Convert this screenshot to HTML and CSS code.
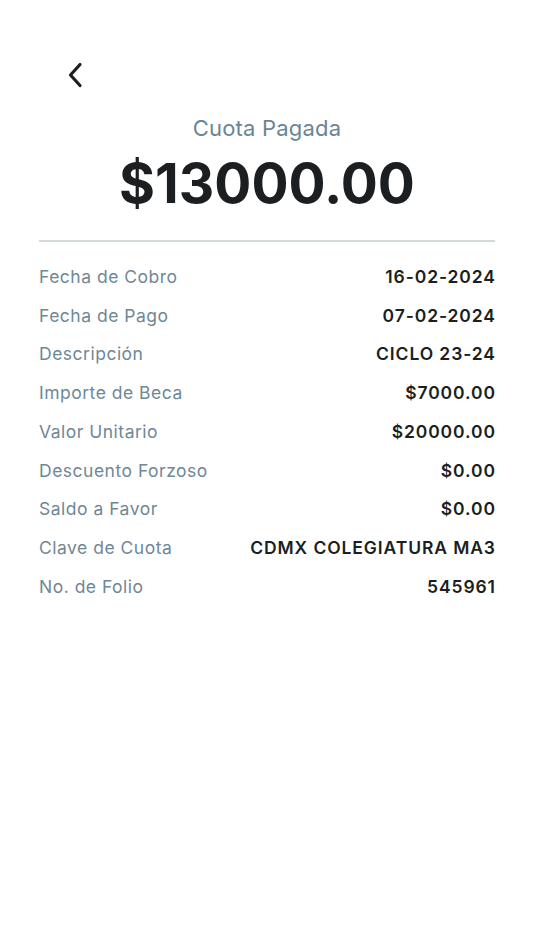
FILE: index.html
```html
<!DOCTYPE html>
<html lang="es">
<head>
<meta charset="utf-8">
<link rel="stylesheet" href="styles.css">
</head>
<body>
<div class="screen">
  <div class="nav">
    <button class="back" aria-label="Atrás">
      <svg width="16" height="26" viewBox="0 0 16 26"><path d="M13 2.5 L3.5 13 L13 23.5" fill="none" stroke="#1b1f22" stroke-width="3.2" stroke-linecap="round" stroke-linejoin="round"/></svg>
    </button>
  </div>
  <div class="header">
    <div class="subtitle">Cuota Pagada</div>
    <div class="amount">$13000.00</div>
  </div>
  <div class="divider"></div>
  <div class="rows">
    <div class="row"><span class="label">Fecha de Cobro</span><span class="value">16-02-2024</span></div>
    <div class="row"><span class="label">Fecha de Pago</span><span class="value">07-02-2024</span></div>
    <div class="row"><span class="label">Descripción</span><span class="value">CICLO 23-24</span></div>
    <div class="row"><span class="label">Importe de Beca</span><span class="value">$7000.00</span></div>
    <div class="row"><span class="label">Valor Unitario</span><span class="value">$20000.00</span></div>
    <div class="row"><span class="label">Descuento Forzoso</span><span class="value">$0.00</span></div>
    <div class="row"><span class="label">Saldo a Favor</span><span class="value">$0.00</span></div>
    <div class="row"><span class="label">Clave de Cuota</span><span class="value">CDMX COLEGIATURA MA3</span></div>
    <div class="row"><span class="label">No. de Folio</span><span class="value">545961</span></div>
  </div>
</div>
</body>
</html>
```

FILE: styles.css
```css
* { box-sizing: border-box; }
html, body { margin: 0; padding: 0; background: #fff; }
body { font-family: Inter, "Noto Sans", sans-serif; color: #1b1f22; }
.screen { width: 534px; min-height: 950px; padding: 0 39px; }
.nav { height: 100px; display: flex; align-items: flex-start; padding-top: 62px; }
.back { background: none; border: 0; padding: 0; margin-left: 28px; width: 16px; height: 26px; display: block; }
.back svg { display: block; }
.header { display: flex; flex-direction: column; align-items: center; }
.subtitle { font-size: 22px; line-height: 28px; color: #6a8595; margin-top: 14px; letter-spacing: 0.2px; }
.amount { font-size: 55px; font-weight: 700; line-height: 66px; margin-top: 8px; letter-spacing: 0; color: #1b1f22; }
.divider { height: 2px; background: #d3dadc; margin-top: 24px; }
.rows { display: flex; flex-direction: column; padding-top: 15px; }
.row { display: flex; justify-content: space-between; align-items: center; height: 38.75px; }
.label { font-size: 17.5px; color: #6f8796; letter-spacing: 0.5px; }
.value { font-size: 17.5px; font-weight: 600; color: #1b1f22; letter-spacing: 0.9px; margin-right: -0.9px; }
```
